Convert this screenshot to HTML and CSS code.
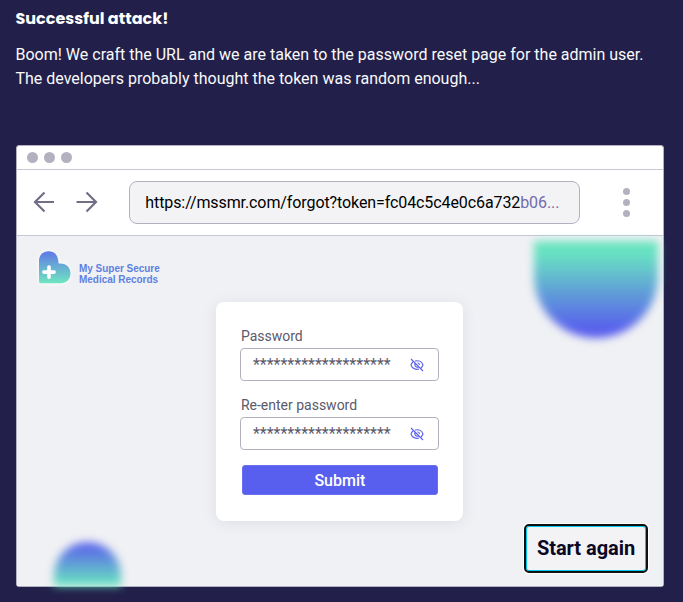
FILE: index.html
```html
<!DOCTYPE html>
<html lang="en">
<head>
<meta charset="utf-8">
<title>Successful attack!</title>
<link rel="stylesheet" href="styles.css">
</head>
<body>
<main class="lesson">
  <h1 class="heading">Successful attack!</h1>
  <p class="copy">Boom! We craft the URL and we are taken to the password reset page for the admin user. The developers probably thought the token was random enough...</p>
  <section class="browser">
    <div class="titlebar"><i class="dot"></i><i class="dot"></i><i class="dot"></i></div>
    <div class="toolbar">
      <svg class="arrow" viewBox="0 0 22 22"><path d="M21 11H1.500M11.500 1.500 2 11l9.500 9.500"/></svg>
      <svg class="arrow" viewBox="0 0 22 22"><path d="M.500 11H20M10.500 1.500 20 11l-9.500 9.500"/></svg>
      <div class="url"><span>https://mssmr.com/forgot?token=fc04c5c4e0c6a732</span><span class="rest">b06...</span></div>
      <div class="menu"><i></i><i></i><i></i></div>
    </div>
    <div class="page">
      <div class="blob blob-top"></div>
      <div class="blob blob-bottom"></div>
      <div class="brand">
        <svg class="logo" viewBox="0 0 32 33">
          <defs><linearGradient id="g" x1="0" y1="0" x2="0" y2="1"><stop offset="0" stop-color="#5f78e6"/><stop offset="1" stop-color="#70e6c0"/></linearGradient></defs>
          <path fill="url(#g)" d="M0 30.500V10C0 4 4 .300 9.700.300S19.300 4 19.600 12.500H21.500c6 0 10 4.300 10 10s-4 9.800-10 9.800H1.800Q0 32.300 0 30.500Z"/>
          <path stroke="#fff" stroke-width="3.600" stroke-linecap="round" d="M10 16v10.200M4.900 21.100h10.200"/>
        </svg>
        <div class="brand-name">My Super Secure<br>Medical Records</div>
      </div>
      <form class="card">
        <label class="label">Password</label>
        <div class="field"><span class="stars">********************</span>
          <svg class="eye" viewBox="0 0 14 14"><path d="M1 1l12 12M5 3.100C9 1.800 12 4 13 7c-.400 1.200-1.100 2.200-2 3M3 4C2 4.800 1.300 5.800 1 7c1 3 4.300 5.200 8 4M5 5.200C4 7.500 6 9.800 8.600 9M7.500 4.700c1.200.200 2 1 2 2.200"/></svg>
        </div>
        <label class="label">Re-enter password</label>
        <div class="field"><span class="stars">********************</span>
          <svg class="eye" viewBox="0 0 14 14"><path d="M1 1l12 12M5 3.100C9 1.800 12 4 13 7c-.400 1.200-1.100 2.200-2 3M3 4C2 4.800 1.300 5.800 1 7c1 3 4.300 5.200 8 4M5 5.200C4 7.500 6 9.800 8.600 9M7.500 4.700c1.200.200 2 1 2 2.200"/></svg>
        </div>
        <button class="submit" type="button">Submit</button>
      </form>
      <button class="again" type="button">Start again</button>
    </div>
  </section>
</main>
</body>
</html>
```
FILE: styles.css
```css
* { box-sizing: border-box; }
body {
  margin: 0;
  height: 602px;
  overflow: hidden;
  background: #22204a;
  font-family: Roboto, "Liberation Sans", sans-serif;
}
.lesson { padding: 7px 19px 0 15.500px; }
.heading {
  margin: 0;
  font: 700 16px/24px Poppins, Inter, sans-serif;
  color: #fff;
}
.copy {
  margin: 12px 0 0;
  height: 102px;
  font-size: 16px;
  line-height: 24px;
  color: #f9f9fb;
}
.browser {
  width: 648px;
  height: 442px;
  margin-left: 0.500px;
  border: 1px solid #b3b1bf;
  border-radius: 3px;
  background: #fff;
}
.titlebar {
  display: flex;
  align-items: center;
  gap: 5.700px;
  height: 24px;
  padding-left: 10.300px;
  border-bottom: 1px solid #c8c7d3;
}
.dot { width: 11px; height: 11px; border-radius: 50%; background: #b3b1bf; }
.toolbar {
  display: flex;
  align-items: center;
  height: 66px;
  padding: 0 0 1px 15.500px;
  border-bottom: 1px solid #c8c7d3;
}
.arrow {
  width: 22px;
  height: 22px;
  margin-right: 21px;
  fill: none;
  stroke: #716f88;
  stroke-width: 2.200;
}
.url {
  width: 451px;
  height: 43px;
  margin-left: 10.500px;
  padding-left: 15.300px;
  border: 1px solid #b3b1bf;
  border-radius: 8px;
  background: #f3f3f5;
  font-size: 16px;
  line-height: 41px;
  letter-spacing: -0.095px;
  white-space: nowrap;
  color: #000;
}
.rest { color: #716cab; }
.menu { display: flex; flex-direction: column; gap: 4px; margin-left: 43px; }
.menu i { width: 7px; height: 7px; border-radius: 50%; background: #b3b1bf; }
.page {
  position: relative;
  height: 350px;
  padding: 66px 0 0 199.400px;
  background: #f0f1f4;
}
.blob { position: absolute; }
.blob-top {
  top: 5px;
  left: 517px;
  width: 124px;
  height: 97px;
  border-radius: 0 0 62px 62px;
  background: linear-gradient(#68e7bd, #68e0c3 14%, #585eed 92%);
  filter: blur(4px);
}
.blob-bottom {
  top: 306px;
  left: 37px;
  width: 67px;
  height: 44px;
  border-radius: 34px 34px 0 0;
  background: linear-gradient(#5b67ea 10%, #68e7bd);
  filter: blur(4px);
}
.brand { position: absolute; top: 15px; left: 21.500px; display: flex; }
.logo { width: 32px; height: 33px; filter: drop-shadow(0 0 2px #fff); }
.brand-name {
  margin: 11.500px 0 0 8.500px;
  font: 700 10px/11px "Liberation Sans", sans-serif;
  letter-spacing: -0.030px;
  color: #5f80e2;
}
.card {
  width: 247px;
  height: 219px;
  padding: 25px 24px 0;
  border-radius: 8px;
  background: #fff;
  box-shadow: 0 2px 14px #dcdee7;
}
.label {
  display: block;
  height: 21px;
  padding-left: 0.500px;
  font-size: 14px;
  line-height: 18px;
  color: #5b596b;
}
.field {
  display: flex;
  align-items: center;
  justify-content: space-between;
  width: 199px;
  height: 33px;
  margin-bottom: 15px;
  padding: 0 14px 0 11.500px;
  border: 1px solid #b3b1bf;
  border-radius: 4px;
}
.stars { font-size: 16px; line-height: 30px; color: #5b596b; }
.eye { width: 14px; height: 14px; margin-top: 1px; fill: none; stroke: #5960eb; stroke-width: 1.100; }
.submit {
  display: block;
  width: 196px;
  height: 30px;
  margin: 0 0 0 1.500px;
  padding: 1px 0 0;
  border: 1px solid #6a70ed;
  border-radius: 3px;
  background: #585eed;
  font: 500 16px/28px Roboto, sans-serif;
  color: #fff;
}
.again {
  position: absolute;
  top: 288px;
  left: 507px;
  width: 124px;
  height: 49px;
  padding: 0 0 2px;
  border: 2px solid #101010;
  border-radius: 5px;
  background: #f3f3f5;
  box-shadow: inset 0 0 0 1px #00c8f0, 0 0 0 1px #fff;
  font: 700 20px/42px Roboto, sans-serif;
  letter-spacing: -0.050px;
  color: #0a0825;
}
```
